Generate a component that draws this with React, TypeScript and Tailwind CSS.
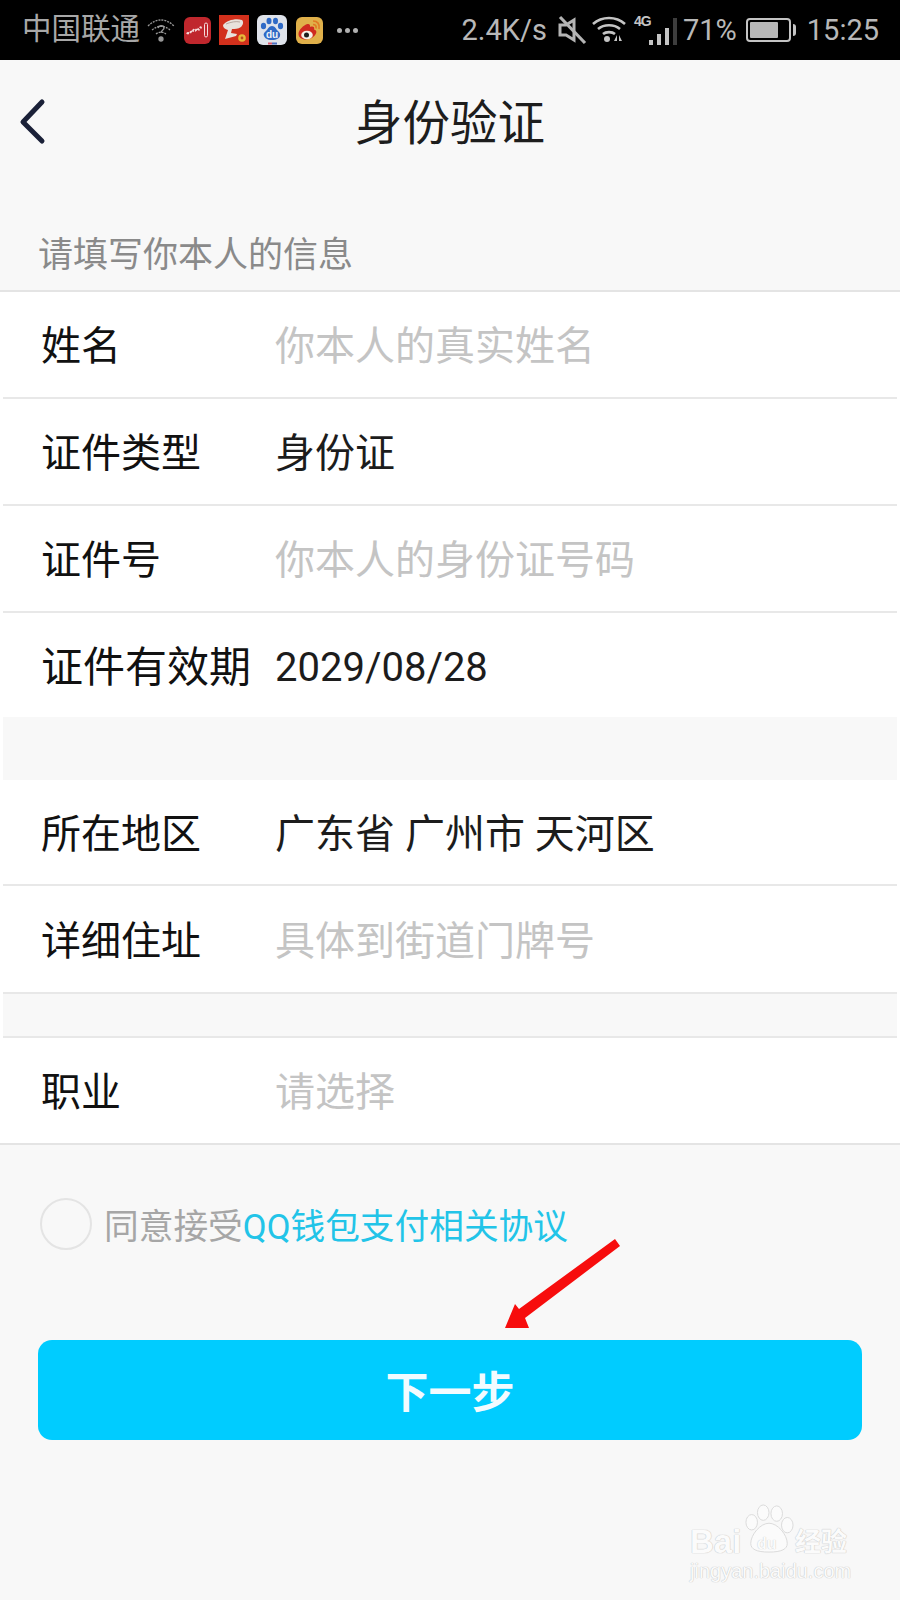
const FONT = "font-['Roboto','Noto_Sans_CJK_SC','Noto_Sans',sans-serif]";
const CJK = "font-['Noto_Sans_CJK_SC','Noto_Sans',sans-serif]";

type Row = { label: string; value: string; muted?: boolean; h: string; border?: boolean; wide?: boolean };

function FormRow({ label, value, muted, h, border = true, wide }: Row) {
  return (
    <div className={`flex items-center pt-[5px] ${h} ${border ? "border-b-2 border-[#e8e8e8]" : ""}`}>
      <div className={`w-[272px] shrink-0 pl-[38px] leading-none text-[#111] ${wide ? "text-[42px] whitespace-nowrap" : "text-[40px]"}`}>{label}</div>
      <div className={`text-[40px] leading-none whitespace-pre ${muted ? "text-[#c4c4c4]" : "text-[#1c1c1c]"}`}>{value}</div>
    </div>
  );
}

function StatusLeftIcons() {
  return (
    <div className="ml-[6px] flex items-center">
      <svg width="30" height="30" viewBox="0 0 30 30" fill="none" stroke="#9a9a9a" strokeWidth="1.3">
        <path d="M2 11C10 3 20 3 28 11M6 15c6-5 12-5 18 0M10 19c3-2.500 7-2.500 10 0" strokeDasharray="2 1" />
        <path d="M12 13c1-3 6-3 6 0 0 2-3 2-3 5" />
        <circle cx="15" cy="24" r="2" fill="#9a9a9a" />
      </svg>
      <svg className="ml-[8px]" width="27" height="27" viewBox="0 0 27 27">
        <rect width="27" height="27" rx="6" fill="#c0272d" />
        <path d="M3 17c1-2 2 0 3-1s1-2 2-1 1-3 2-2 1 1 2 0 1-2 2-1 1 1 2-1 1 0 1 1" fill="none" stroke="#f5dcdc" strokeWidth="2" strokeDasharray="2.500 1" />
        <rect x="20.500" y="6" width="3" height="14" rx="1.500" fill="none" stroke="#f5dcdc" strokeWidth="1" />
      </svg>
      <svg className="ml-[8px]" width="30" height="30" viewBox="0 0 30 30">
        <rect width="30" height="30" fill="#d2301c" />
        <path d="M4 10c4-5 13-7 19-5 2 2 1 5-1 7-3 2-6 2-9 2l-1 4 6 1-1 2-11 3 3-9c-3-1-5-2-5-5z" fill="#e8e2dc" />
        <path d="M7 9c5-2 10-3 14-2" fill="none" stroke="#b8a8a0" strokeWidth="1" />
        <circle cx="23" cy="23" r="3.800" fill="#e6b93a" />
        <circle cx="23" cy="23" r="1.400" fill="#b8501c" />
      </svg>
      <svg className="ml-[8px]" width="30" height="30" viewBox="0 0 30 30">
        <rect width="30" height="30" rx="6" fill="#dfe3ea" />
        <g fill="#2f6ac6">
          <ellipse cx="6.500" cy="11" rx="2.600" ry="3.300" />
          <ellipse cx="12" cy="6" rx="2.500" ry="3.300" />
          <ellipse cx="18.500" cy="6" rx="2.500" ry="3.300" />
          <ellipse cx="23.500" cy="11" rx="2.600" ry="3.300" />
          <path d="M15 11c3 0 4 3 6 5s2.500 3 2 5-3 4-8 4-7-2-8-4 0-3 2-5 3-5 6-5z" />
        </g>
        <path d="M11 28.500h4" stroke="#d8566a" strokeWidth="2" />
        <path d="M15 28.500h5" stroke="#4a6fc0" strokeWidth="2" />
        <text x="15" y="23" textAnchor="middle" fontSize="10" fontWeight="700" fill="#eef1f6" fontFamily="Liberation Sans, sans-serif">du</text>
      </svg>
      <svg className="ml-[9px]" width="27" height="27" viewBox="0 0 27 27">
        <rect width="27" height="27" rx="6" fill="#e0b04a" />
        <path d="M2.500 17c0-4 5-9 9-10 2-.500 3 1 2.500 3 3-1 5 0 4 2.500 2 .500 3 2 2 4-1 3-6 6-10 6-5 0-7.500-2.500-7.500-5.500z" fill="#cf2a20" />
        <ellipse cx="11" cy="18" rx="5.800" ry="4.300" fill="#f6f0e6" />
        <circle cx="10.500" cy="18" r="2.500" fill="#1d1d1d" />
        <path d="M17 4c4.500 0 7 3 6 8M17 7.500c2.500 0 3.500 1.500 3 4" fill="none" stroke="#e07a24" strokeWidth="1.700" />
      </svg>
      <div className="ml-[14px] flex gap-[3px]">
        <span className="h-[5px] w-[5px] rounded-full bg-[#b0b0b0]" />
        <span className="h-[5px] w-[5px] rounded-full bg-[#b0b0b0]" />
        <span className="h-[5px] w-[5px] rounded-full bg-[#b0b0b0]" />
      </div>
    </div>
  );
}

function StatusRightIcons() {
  return (
    <>
      <svg className="ml-[11px]" width="29" height="30" viewBox="0 0 29 30" fill="none" stroke="#b4b4b4" strokeWidth="3">
        <path d="M2 10h6l8-5v20l-8-5H2z" />
        <path d="M2 2l25 26" strokeWidth="3.200" />
      </svg>
      <svg className="ml-[5px]" width="34" height="28" viewBox="0 0 34 28" fill="none" stroke="#c4c4c4" strokeWidth="2.600">
        <path d="M1 8c9-8 23-8 32 0M6 13c6-5 16-5 22 0M11 18c3-2.500 9-2.500 12 0" />
        <circle cx="15" cy="23" r="3" fill="#c4c4c4" stroke="none" />
        <path d="M25 19l-3 6h3zM27 19l3 6h-3z" fill="#c4c4c4" stroke="none" />
      </svg>
      <div className="relative ml-[8px] h-[30px] w-[49px]">
        <span className="absolute left-0 top-[-1px] text-[14px] leading-none font-bold tracking-[-1px] text-[#c4c4c4] font-['Liberation_Sans',sans-serif]">4G</span>
        <div className="absolute bottom-0 left-[15px] flex items-end gap-[4px]">
          <span className="h-[5px] w-[4px] bg-[#c4c4c4]" />
          <span className="h-[11px] w-[4px] bg-[#c4c4c4]" />
          <span className="h-[17px] w-[4px] bg-[#c4c4c4]" />
          <span className="h-[27px] w-[4px] bg-[#3d3d3d]" />
        </div>
      </div>
    </>
  );
}

function Arrow() {
  return (
    <svg className="absolute left-[500px] top-[1238px]" width="125" height="95" viewBox="0 0 125 95">
      <path d="M115 1L120 8 25 80 29 90 5 90 15 66 19 71Z" fill="#f70d0d" />
    </svg>
  );
}

function Watermark() {
  const outline = "[text-shadow:0_0_1px_#c4c4c4,0_0_1px_#c4c4c4]";
  return (
    <div className={`absolute left-[690px] top-[1503px] h-[80px] w-[170px] ${CJK}`}>
      <svg className="absolute left-[54px] top-0" width="50" height="52" viewBox="0 0 52 52" fill="#fbfbfb" stroke="#dadada" strokeWidth="1">
        <ellipse cx="8" cy="19" rx="6" ry="8" />
        <ellipse cx="20" cy="9" rx="6" ry="8" />
        <ellipse cx="34" cy="10" rx="6" ry="8" />
        <ellipse cx="45" cy="22" rx="6" ry="8" />
        <path d="M26 20c9 0 19 12 19 21 0 6-6 9-19 9S7 47 7 41c0-9 10-21 19-21z" />
      </svg>
      <div className="absolute left-[67px] top-[33px] text-[16px] leading-none font-bold text-[#fbfbfb] [text-shadow:0_0_1px_#b8b8b8] font-['Liberation_Sans',sans-serif]">du</div>
      <div className={`absolute left-0 top-[22px] text-[33px] leading-none font-bold text-[#fbfbfb] ${outline} font-['Liberation_Sans',sans-serif]`}>Bai</div>
      <div className={`absolute left-[105px] top-[24px] text-[26px] leading-none font-bold text-[#fbfbfb] ${outline}`}>经验</div>
      <div className={`absolute left-0 top-[58px] text-[20px] leading-none whitespace-nowrap text-[#fbfbfb] ${outline} font-['Liberation_Sans',sans-serif]`}>jingyan.baidu.com</div>
    </div>
  );
}

export default function App() {
  return (
    <div className={`relative h-[1600px] w-[900px] overflow-hidden bg-[#f8f8f8] ${FONT}`}>
      <div className="flex h-[60px] items-center justify-between bg-black pl-[22px] pr-[21px]">
        <div className="flex items-center">
          <span className="text-[29.500px] leading-none text-[#a8a8a8]">中国联通</span>
          <StatusLeftIcons />
        </div>
        <div className="flex items-center text-[29px] leading-none text-[#b8b8b8]">
          <span>2.4K/s</span>
          <StatusRightIcons />
          <span>71%</span>
          <div className="ml-[9px] flex items-center">
            <div className="h-[24px] w-[45px] rounded-[4px] border-2 border-[#c4c4c4] p-[2px]">
              <div className="h-full w-[75%] rounded-[1px] bg-[#b8b8b8]" />
            </div>
            <div className="ml-[2px] h-[12px] w-[3px] rounded-r-sm bg-[#c4c4c4]" />
          </div>
          <span className="ml-[11px]">15:25</span>
        </div>
      </div>

      <div className="relative flex h-[130px] items-center justify-center">
        <svg className="absolute left-[18px] top-[38px]" width="30" height="50" viewBox="0 0 30 50" fill="none" stroke="#1b2138" strokeWidth="5" strokeLinecap="round" strokeLinejoin="round">
          <path d="M24 4L5 24l19 19" />
        </svg>
        <span className="-mt-[1px] text-[47.500px] leading-none text-[#1d1d1d]">身份验证</span>
      </div>

      <div className="flex h-[102px] items-center border-b-2 border-[#e4e4e4] pl-[38px] pt-[30px] text-[35px] leading-none text-[#8a8a8a]">
        请填写你本人的信息
      </div>

      <div className="bg-white px-[3px]">
        <FormRow label="姓名" value="你本人的真实姓名" muted h="h-[107px]" />
        <FormRow label="证件类型" value="身份证" h="h-[107px]" />
        <FormRow label="证件号" value="你本人的身份证号码" muted h="h-[107px]" />
        <FormRow label="证件有效期" value="2029/08/28" h="h-[104px]" border={false} wide />
        <div className="h-[63px] bg-[#f8f8f8]" />
        <FormRow label="所在地区" value="广东省 广州市 天河区" h="h-[106px]" />
        <FormRow label="详细住址" value="具体到街道门牌号" muted h="h-[108px]" />
        <div className="h-[44px] border-b-2 border-[#e8e8e8] bg-[#f8f8f8]" />
        <FormRow label="职业" value="请选择" muted h="h-[105px]" border={false} />
      </div>

      <div className="h-[2px] bg-[#e4e4e4]" />

      <div className="mt-[53px] flex items-center pl-[40px]">
        <div className="h-[52px] w-[52px] rounded-full border-2 border-[#e4e4e4]" />
        <div className="ml-[12px] pt-[7px] text-[34.700px] leading-none text-[#a6a6a6]">
          同意接受<span className="text-[#22c4e8]">QQ钱包支付相关协议</span>
        </div>
      </div>

      <div className="mx-[38px] mt-[90px] flex h-[100px] items-center justify-center rounded-[14px] bg-[#00ccff] pt-[7px] text-[43px] leading-none font-bold text-[#f2fbff]">
        下一步
      </div>

      <Arrow />
      <Watermark />
    </div>
  );
}
